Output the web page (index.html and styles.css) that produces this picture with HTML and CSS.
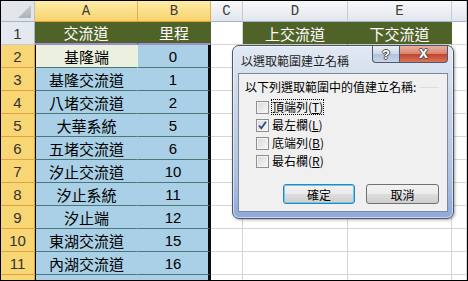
FILE: index.html
```html
<!DOCTYPE html>
<html lang="zh-Hant">
<head>
    <meta charset="UTF-8">
    <title>以選取範圍建立名稱</title>
    <link rel="stylesheet" href="styles.css">
</head>
<body>
    <div class="sheet">
        <!-- 欄標題 -->
        <div class="corner"></div>
        <div class="ch on">A</div>
        <div class="ch on">B</div>
        <div class="ch">C</div>
        <div class="ch">D</div>
        <div class="ch">E</div>
        <div class="ch"></div>

        <div class="rh">1</div>
        <div class="cell hd top">交流道</div>
        <div class="cell hd top">里程</div>
        <div class="cell"></div>
        <div class="cell hd">上交流道</div>
        <div class="cell hd">下交流道</div>
        <div class="cell"></div>

        <div class="rh on">2</div>
        <div class="cell s l act">基隆端</div>
        <div class="cell s r n">0</div>
        <div class="cell"></div><div class="cell"></div><div class="cell"></div><div class="cell"></div>

        <div class="rh on">3</div>
        <div class="cell s l">基隆交流道</div>
        <div class="cell s r n">1</div>
        <div class="cell"></div><div class="cell"></div><div class="cell"></div><div class="cell"></div>

        <div class="rh on">4</div>
        <div class="cell s l">八堵交流道</div>
        <div class="cell s r n">2</div>
        <div class="cell"></div><div class="cell"></div><div class="cell"></div><div class="cell"></div>

        <div class="rh on">5</div>
        <div class="cell s l">大華系統</div>
        <div class="cell s r n">5</div>
        <div class="cell"></div><div class="cell"></div><div class="cell"></div><div class="cell"></div>

        <div class="rh on">6</div>
        <div class="cell s l">五堵交流道</div>
        <div class="cell s r n">6</div>
        <div class="cell"></div><div class="cell"></div><div class="cell"></div><div class="cell"></div>

        <div class="rh on">7</div>
        <div class="cell s l">汐止交流道</div>
        <div class="cell s r n">10</div>
        <div class="cell"></div><div class="cell"></div><div class="cell"></div><div class="cell"></div>

        <div class="rh on">8</div>
        <div class="cell s l">汐止系統</div>
        <div class="cell s r n">11</div>
        <div class="cell"></div><div class="cell"></div><div class="cell"></div><div class="cell"></div>

        <div class="rh on">9</div>
        <div class="cell s l">汐止端</div>
        <div class="cell s r n">12</div>
        <div class="cell"></div><div class="cell"></div><div class="cell"></div><div class="cell"></div>

        <div class="rh on">10</div>
        <div class="cell s l">東湖交流道</div>
        <div class="cell s r n">15</div>
        <div class="cell"></div><div class="cell"></div><div class="cell"></div><div class="cell"></div>

        <div class="rh on">11</div>
        <div class="cell s l">內湖交流道</div>
        <div class="cell s r n">16</div>
        <div class="cell"></div><div class="cell"></div><div class="cell"></div><div class="cell"></div>

        <!-- 第 12 列只露出上緣 -->
        <div class="rh on"></div>
        <div class="cell s l"></div>
        <div class="cell s r n"></div>
        <div class="cell"></div><div class="cell"></div><div class="cell"></div><div class="cell"></div>

        <!-- 對話方塊 -->
        <div class="dialog">
            <div class="titlebar">
                <div class="title">以選取範圍建立名稱</div>
                <div class="caps">
                    <div class="cap help">?</div>
                    <div class="cap close">x</div>
                </div>
            </div>
            <div class="panel">
                <div class="legend">以下列選取範圍中的值建立名稱:</div>
                <div class="opts">
                    <div class="opt"><span class="box"></span><span class="lbl focus">頂端列(<u>T</u>)</span></div>
                    <div class="opt">
                        <span class="box">
                            <svg width="11" height="11" viewBox="0 0 11 11"><path d="M2 5.5 L4.3 8.3 L9 1.8" fill="none" stroke="#34498a" stroke-width="1.8"/></svg>
                        </span>
                        <span class="lbl">最左欄(<u>L</u>)</span>
                    </div>
                    <div class="opt"><span class="box"></span><span class="lbl">底端列(<u>B</u>)</span></div>
                    <div class="opt"><span class="box"></span><span class="lbl">最右欄(<u>R</u>)</span></div>
                </div>
                <div class="btns">
                    <button class="btn def">確定</button>
                    <button class="btn">取消</button>
                </div>
            </div>
        </div>
    </div>
</body>
</html>
```

FILE: styles.css
```css
* {
    margin: 0;
    padding: 0;
    box-sizing: border-box;
}

body {
    width: 468px;
    height: 281px;
    overflow: hidden;
    background: #fff;
    font-family: "Noto Sans CJK TC", sans-serif;
}

/* 工作表 */
.sheet {
    position: relative;
    width: 468px;
    height: 281px;
    border: 1px solid #000;
    overflow: hidden;
    display: grid;
    grid-template-columns: 34px 103px 73px 32px 105px 104px 1fr;
    grid-template-rows: 21px repeat(12, 23px);
}

.corner {
    background: #e2e6eb;
    border-right: 1px solid #b9c0c9;
    border-bottom: 1px solid #9eb6ce;
    display: flex;
    align-items: flex-end;
    justify-content: flex-end;
    padding: 3px;
}

.corner::after {
    content: "";
    width: 13px;
    height: 13px;
    background: linear-gradient(#c9cdd2, #aeb3b9);
    clip-path: polygon(100% 0, 100% 100%, 0 100%);
}

.ch {
    background: linear-gradient(#f8f9fb, #e2e6ec);
    border-right: 1px solid #c5cbd3;
    border-bottom: 1px solid #9eb6ce;
    display: flex;
    align-items: center;
    justify-content: center;
    font-family: "Liberation Mono", monospace;
    font-size: 14px;
    color: #3c3c3c;
}

.ch.on {
    background: linear-gradient(#fdeca9, #f8d36c);
    border-right-color: #e2ad52;
    border-bottom-color: #e0a43a;
}

.rh {
    background: #e4e9ef;
    border-right: 1px solid #9eb6ce;
    border-bottom: 1px solid #c5cbd3;
    display: flex;
    align-items: center;
    justify-content: center;
    font-family: "Liberation Sans", sans-serif;
    font-size: 15px;
    color: #333;
}

.rh.on {
    background: #f9d674;
    border-right-color: #e0a43a;
    border-bottom-color: #dca24a;
}

.cell {
    border-right: 1px solid #d6d6d6;
    border-bottom: 1px solid #d6d6d6;
    display: flex;
    align-items: center;
    justify-content: center;
    font-size: 15px;
    line-height: 1;
    color: #000;
    white-space: nowrap;
}

.hd {
    background: #4f6228;
    color: #fff;
    border-right-color: #4f6228;
}

.hd.top {
    border-bottom: 2px solid #9d90cc;
}

/* 選取範圍 */
.s {
    background: #a9d0e6;
    border-right-color: #a9d0e6;
    border-bottom-color: #4b7774;
}

.s.l {
    border-left: 1px solid #000;
}

.s.r {
    border-right: 3px solid #0c0c0c;
}

.s.act {
    background: #ebf1de;
    border-right-color: #ebf1de;
}

.n {
    font-family: "Liberation Sans", sans-serif;
}

/* 對話方塊 */
.dialog {
    position: absolute;
    left: 231px;
    top: 44px;
    width: 222px;
    height: 174px;
    border: 1px solid #4a5566;
    border-radius: 7px;
    background: linear-gradient(#e2e9f3, #c8d6ea 35%, #adc2e3 75%, #8ea9db);
    box-shadow: inset 0 0 0 1px rgba(255, 255, 255, 0.55), 1px 1px 3px rgba(0, 0, 0, 0.35);
    padding: 0 5px 6px;
    display: flex;
    flex-direction: column;
}

.titlebar {
    height: 27px;
    display: flex;
    align-items: flex-start;
}

.title {
    font-size: 12px;
    line-height: 14px;
    color: #1e1e1e;
    margin-top: 8px;
    padding-left: 3px;
}

.caps {
    margin-left: auto;
    display: flex;
}

.cap {
    height: 17px;
    border: 1px solid #4c5a6d;
    border-top: none;
    display: flex;
    align-items: center;
    justify-content: center;
    font-family: "Liberation Sans", sans-serif;
    font-weight: bold;
    color: #fff;
    text-shadow: 1px 0 #4a4a4a, -1px 0 #4a4a4a, 0 1px #4a4a4a, 0 -1px #4a4a4a;
}

.cap.help {
    width: 28px;
    font-size: 13px;
    background: linear-gradient(#e9eef5, #cdd8e6 50%, #b1c1d7 50%, #c6d5ea);
    border-radius: 0 0 0 4px;
}

.cap.close {
    width: 48px;
    font-size: 16px;
    line-height: 1;
    padding-bottom: 3px;
    border-left: none;
    background: linear-gradient(#eab0a0, #d8836c 50%, #c0412b 50%, #d8745b);
    border-radius: 0 0 4px 0;
}

.panel {
    flex: 1;
    background: #f0f0f0;
    border: 1px solid #7f8a99;
    padding: 6px 8px 7px 6px;
    display: flex;
    flex-direction: column;
    font-size: 12px;
    color: #000;
}

.legend {
    height: 14px;
    line-height: 14px;
    display: flex;
    align-items: center;
}

.legend::after {
    content: "";
    flex: 1;
    height: 1px;
    background: #d5dfe5;
    margin-left: 4px;
}

.opts {
    margin-top: 4px;
    padding-left: 11px;
}

.opt {
    height: 18px;
    display: flex;
    align-items: center;
    gap: 3px;
}

.box {
    width: 13px;
    height: 13px;
    border: 1px solid #8f8f8f;
    background: linear-gradient(135deg, #d8d8d8, #f8f8f8);
    box-shadow: inset 0 0 0 1px #f4f4f4;
    display: flex;
    align-items: center;
    justify-content: center;
}

.lbl {
    line-height: 14px;
}

.focus {
    outline: 1px dotted #000;
}

.btns {
    margin-top: auto;
    display: flex;
    justify-content: flex-end;
    gap: 11px;
}

.btn {
    width: 73px;
    height: 20px;
    border: 1px solid #707070;
    border-radius: 3px;
    background: linear-gradient(#f2f2f2, #ebebeb 50%, #dddddd 50%, #cfcfcf);
    font-family: "Noto Sans CJK TC", sans-serif;
    font-size: 12px;
    color: #000;
}

.btn.def {
    width: 72px;
    border-color: #3c7fb1;
    box-shadow: inset 0 0 0 1px #5ccff4;
}
```
